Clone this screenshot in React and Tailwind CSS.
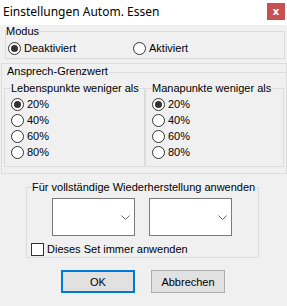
import React from 'react'

function Radio({ checked = false, label, className = '' }) {
  return (
    <div className={`flex h-[16px] items-center ${className}`}>
      <div className="flex h-[13px] w-[13px] shrink-0 items-center justify-center rounded-full border border-[#333] bg-white">
        {checked ? <div className="h-[7px] w-[7px] rounded-full bg-[#333]" /> : null}
      </div>
      <span className="ml-[3px] leading-[14px]">{label}</span>
    </div>
  )
}

function Combo() {
  return (
    <div className="flex h-[38px] w-[83px] items-center justify-end border border-[#7a7a7a] bg-white pr-[4px]">
      <svg width="9" height="5" viewBox="0 0 9 5" fill="none">
        <path d="M0.5 0.5 L4.5 4.5 L8.5 0.5" stroke="#606060" strokeWidth="1" />
      </svg>
    </div>
  )
}

function PercentBox({ label, className = '' }) {
  return (
    <fieldset className={`min-w-0 border border-[#dcdcdc] pb-[6px] pl-[6px] ${className}`}>
      <legend className="whitespace-nowrap leading-[14px]">{label}</legend>
      <div className="mt-[1px] flex flex-col">
        <Radio checked label="20%" />
        <Radio label="40%" />
        <Radio label="60%" />
        <Radio label="80%" />
      </div>
    </fieldset>
  )
}

export default function App() {
  return (
    <div className="flex h-[306px] w-[287px] flex-col overflow-hidden bg-[#f0f0f0] font-['Liberation_Sans',Arial,sans-serif] text-[11px] text-black">
      {/* Titelleiste */}
      <div className="flex h-[25px] shrink-0 items-start justify-between bg-white">
        <span className="ml-[3px] mt-[4px] font-['Noto_Sans',sans-serif] text-[12px] leading-[16px]">
          Einstellungen Autom. Essen
        </span>
        <div className="mr-[2px] mt-[3px] flex h-[17px] w-[18px] items-center justify-center bg-[#c75050] pb-[2px] font-['Noto_Sans',sans-serif] text-[11px] font-bold leading-none text-white">
          x
        </div>
      </div>

      <fieldset className="ml-[5px] mt-[-1px] w-[280px] min-w-0 border border-[#dcdcdc] pb-[2px]">
        <legend className="leading-[14px]">Modus</legend>
        <div className="ml-[2px] mt-[2px] flex">
          <Radio checked label="Deaktiviert" className="w-[125px]" />
          <Radio label="Aktiviert" />
        </div>
      </fieldset>

      <div className="ml-[1px] mt-[4px] w-[286px] border border-[#dcdcdc] pb-[6px]">
        <div className="flex h-[14px]">
          <span className="pl-[5px] leading-[14px]">Ansprech-Grenzwert</span>
          <div className="ml-[1px] mt-[8px] flex-1 border-t border-[#dcdcdc]" />
        </div>
        <div className="ml-[2px] mt-[3px] flex">
          <PercentBox label="Lebenspunkte weniger als" className="w-[141px]" />
          <PercentBox label="Manapunkte weniger als" className="w-[139px]" />
        </div>
      </div>

      <fieldset className="ml-[26px] mt-[6px] w-[233px] min-w-0 border border-[#dcdcdc] pb-[1px] pl-[4px]">
        <legend className="ml-[1px] whitespace-nowrap leading-[14px]">Für vollständige Wiederherstellung anwenden</legend>
        <div className="mt-[4px] flex gap-[14px] pl-[21px]">
          <Combo />
          <Combo />
        </div>
        <div className="mt-[6px] flex h-[14px] items-center">
          <div className="h-[13px] w-[13px] border border-[#333] bg-white" />
          <span className="ml-[3px] leading-[14px]">Dieses Set immer anwenden</span>
        </div>
      </fieldset>

      <div className="mt-[12px] flex gap-[16px] pl-[61px]">
        <button type="button" className="h-[23px] w-[74px] border-2 border-[#0078d7] bg-[#e1e1e1] leading-[14px]">
          OK
        </button>
        <button type="button" className="h-[23px] w-[74px] border border-[#adadad] bg-[#e1e1e1] leading-[14px]">
          Abbrechen
        </button>
      </div>
    </div>
  )
}
